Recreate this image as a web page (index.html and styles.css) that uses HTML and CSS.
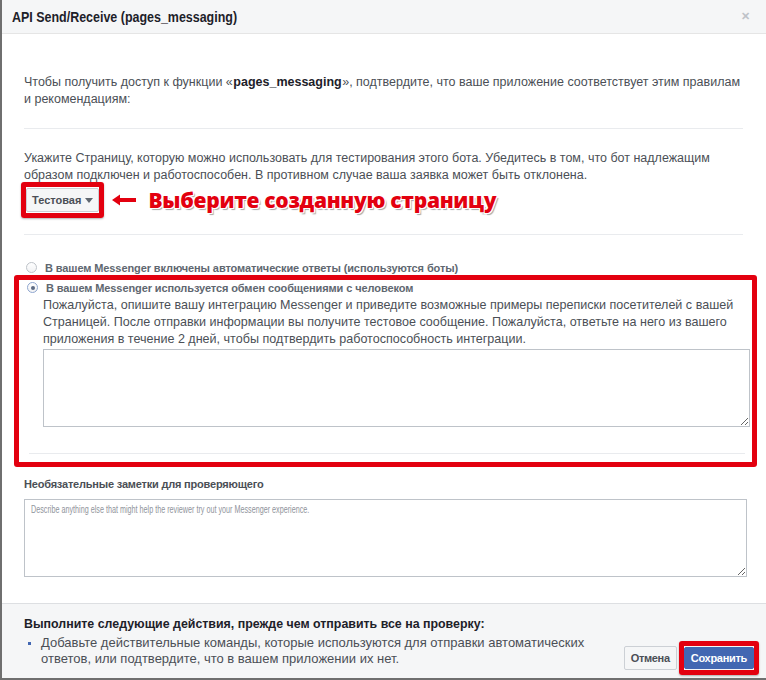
FILE: index.html
```html
<!DOCTYPE html>
<html lang="ru">
<head>
    <meta charset="UTF-8">
    <title>API Send/Receive (pages_messaging)</title>
    <link rel="stylesheet" href="styles.css">
</head>
<body>

<div class="dialog">
    <div class="dialog-header">
        <span class="dialog-title">API Send/Receive (pages_messaging)</span>
        <span class="dialog-close">&#x2715;</span>
    </div>

    <div class="dialog-body">
        <p class="intro">Чтобы получить доступ к функции «<b>pages_messaging</b>», подтвердите, что ваше приложение соответствует этим правилам и рекомендациям:</p>

        <div class="sep"></div>

        <p class="page-hint">Укажите Страницу, которую можно использовать для тестирования этого бота. Убедитесь в том, что бот надлежащим образом подключен и работоспособен. В противном случае ваша заявка может быть отклонена.</p>

        <div class="select-row">
            <div class="mark mark-select">
                <button class="select-btn">Тестовая <span class="caret"></span></button>
            </div>
            <svg class="mark-arrow" width="30" height="16" viewBox="0 0 30 16">
                <path d="M3 8 L11 2.5 L11 6 L27 6 L27 10 L11 10 L11 13.5 Z" fill="#fff" stroke="#fff" stroke-width="3" stroke-linejoin="round"/>
                <path d="M3 8 L11 2.5 L11 6 L27 6 L27 10 L11 10 L11 13.5 Z" fill="#e3000f"/>
            </svg>
            <span class="mark-text">Выберите созданную страницу</span>
        </div>

        <div class="sep sep-select"></div>

        <label class="radio-row radio-first">
            <span class="radio"></span>
            <span class="radio-label">В вашем Messenger включены автоматические ответы (используются боты)</span>
        </label>

        <div class="mark mark-human">
            <label class="radio-row">
                <span class="radio checked"></span>
                <span class="radio-label">В вашем Messenger используется обмен сообщениями с человеком</span>
            </label>
            <p class="human-desc">Пожалуйста, опишите вашу интеграцию Messenger и приведите возможные примеры переписки посетителей с вашей Страницей. После отправки информации вы получите тестовое сообщение. Пожалуйста, ответьте на него из вашего приложения в течение 2 дней, чтобы подтвердить работоспособность интеграции.</p>
            <textarea class="human-text"></textarea>
            <div class="sep sep-inner"></div>
        </div>

        <div class="field-label">Необязательные заметки для проверяющего</div>
        <div class="notes-wrap">
            <textarea class="notes"></textarea>
            <span class="notes-hint">Describe anything else that might help the reviewer try out your Messenger experience.</span>
        </div>
    </div>

    <div class="dialog-footer">
        <div class="todo">
            <div class="todo-title">Выполните следующие действия, прежде чем отправить все на проверку:</div>
            <ul class="todo-list">
                <li>Добавьте действительные команды, которые используются для отправки автоматических ответов, или подтвердите, что в вашем приложении их нет.</li>
            </ul>
        </div>
        <div class="footer-buttons">
            <button class="btn">Отмена</button>
            <div class="mark mark-save">
                <button class="btn btn-primary">Сохранить</button>
            </div>
        </div>
    </div>
</div>

</body>
</html>
```

FILE: styles.css
```css
html, body {
    margin: 0;
    padding: 0;
    background: #fff;
}
body {
    font-family: "Liberation Sans", Arial, sans-serif;
    color: #4b4f56;
    font-size: 12px;
}
.dialog {
    width: 764px;
    height: 678px;
    border-left: 2px solid #6f6f6f;
    border-bottom: 2px solid #6f6f6f;
    display: flex;
    flex-direction: column;
    background: #fff;
}
.dialog-header {
    height: 33px;
    background: #f5f6f7;
    border-bottom: 1px solid #e5e5e5;
    display: flex;
    align-items: center;
    justify-content: space-between;
    padding: 0 16px 0 10px;
}
.dialog-title {
    display: inline-block;
    font-size: 14px;
    font-weight: bold;
    color: #1d2129;
    transform: scaleX(0.89);
    transform-origin: left center;
}
.dialog-close {
    font-size: 11px;
    color: #bec3c9;
    font-weight: bold;
}
.dialog-body {
    flex: 1;
    padding: 40px 23px 0 22px;
}
.dialog-body p {
    margin: 0;
    line-height: 17px;
}
.intro {
    font-size: 12.5px;
}
.intro b {
    color: #1d2129;
    padding: 0 0.5px;
}
.page-hint {
    font-size: 12.5px;
}
.sep {
    height: 1px;
    background: #e9ebee;
    margin: 20px 0 21px;
}
.sep-select {
    margin: 16px 0 0;
}
.select-row {
    display: flex;
    align-items: center;
    margin: -2px 0 0 -3px;
}
.mark {
    border: 5px solid #e3000f;
    border-radius: 3px;
    box-shadow: 0 1px 2px rgba(0, 0, 0, 0.3);
}
.mark-select {
    padding: 1px 0;
}
.select-btn {
    font-family: "Liberation Sans", Arial, sans-serif;
    font-size: 11px;
    font-weight: bold;
    color: #4b4f56;
    background: #f5f6f7;
    border: 1px solid #ccd0d5;
    border-radius: 2px;
    height: 24px;
    padding: 0 5px;
    display: flex;
    align-items: center;
    gap: 4px;
}
.caret {
    width: 0;
    height: 0;
    border-left: 4px solid transparent;
    border-right: 4px solid transparent;
    border-top: 5px solid #606770;
}
.mark-arrow {
    margin-left: 5px;
}
.mark-text {
    margin-left: 9px;
    font-family: "Open Sans", sans-serif;
    font-weight: 800;
    font-size: 21px;
    color: #e3000f;
    letter-spacing: -0.3px;
    text-shadow:
        -1px -1px 0 #fff, 1px -1px 0 #fff, -1px 1px 0 #fff, 1px 1px 0 #fff,
        0 -1px 0 #fff, 0 1px 0 #fff, -1px 0 0 #fff, 1px 0 0 #fff,
        2px 2px 1px rgba(0, 0, 0, 0.35);
}
.radio-row {
    display: flex;
    align-items: center;
    gap: 8px;
    height: 13px;
}
.radio-first {
    margin: 26px 0 0 2px;
}
.radio {
    width: 11px;
    height: 11px;
    border: 1px solid #bec3c9;
    border-radius: 50%;
    background: linear-gradient(#fff, #f1f2f4);
    box-sizing: border-box;
    display: flex;
    align-items: center;
    justify-content: center;
}
.radio.checked::after {
    content: "";
    width: 4px;
    height: 4px;
    border-radius: 50%;
    background: #5d6b84;
}
.radio.checked {
    border-color: #8fa6cf;
}
.radio-label {
    font-size: 11px;
    font-weight: bold;
    color: #606770;
    letter-spacing: -0.1px;
}
.mark-human {
    margin: 1px -14px 0 -10px;
    padding: 1px 2px 8px 8px;
    box-shadow: none;
}
.human-desc {
    margin: 3px 0 0 16px !important;
    color: #4b4f56;
    font-size: 12.55px;
}
.human-text {
    display: block;
    margin: 1px 0 0 16px;
    width: calc(100% - 16px);
    height: 78px;
    box-sizing: border-box;
    border: 1px solid #bec3c9;
    resize: vertical;
}
.sep-inner {
    margin: 26px 5px 0 2px;
}
.field-label {
    margin-top: 11px;
    font-size: 11px;
    font-weight: bold;
    color: #4b4f56;
    letter-spacing: -0.2px;
}
.notes-wrap {
    position: relative;
    margin-top: 9px;
    width: calc(100% + 4px);
}
.notes {
    display: block;
    width: 100%;
    height: 78px;
    box-sizing: border-box;
    border: 1px solid #bec3c9;
    resize: vertical;
}
.notes-hint {
    position: absolute;
    left: 7px;
    top: 4px;
    font-size: 11px;
    color: #90949c;
    white-space: nowrap;
    pointer-events: none;
    transform: scaleX(0.655);
    transform-origin: left top;
}
.dialog-footer {
    height: 74px;
    background: #f5f6f7;
    border-top: 1px solid #dddfe2;
    display: flex;
    justify-content: space-between;
    padding: 0 7px 0 22px;
}
.todo {
    padding-top: 13px;
}
.todo-title {
    font-size: 12.4px;
    font-weight: bold;
    color: #1d2129;
}
.todo-list {
    margin: 4px 0 0;
    padding: 0 0 0 17px;
    list-style: none;
}
.todo-list li {
    position: relative;
    width: 560px;
    line-height: 16px;
    font-size: 13px;
    color: #4b4f56;
}
.todo-list li::before {
    content: "";
    position: absolute;
    left: -13px;
    top: 7px;
    width: 3px;
    height: 3px;
    background: #4267b2;
}
.footer-buttons {
    display: flex;
    align-items: center;
    gap: 2px;
    padding-top: 37px;
    align-self: flex-start;
}
.btn {
    font-family: "Liberation Sans", Arial, sans-serif;
    font-size: 11px;
    font-weight: bold;
    color: #4b4f56;
    background: #f5f6f7;
    border: 1px solid #ccd0d5;
    border-radius: 2px;
    height: 24px;
    padding: 0 6px;
    letter-spacing: -0.3px;
}
.mark-save {
    padding: 1px 0;
}
.btn-primary {
    background: #4267b2;
    border-color: #4267b2;
    color: #fff;
    height: 22px;
    padding: 0 6px;
    display: block;
}
```
